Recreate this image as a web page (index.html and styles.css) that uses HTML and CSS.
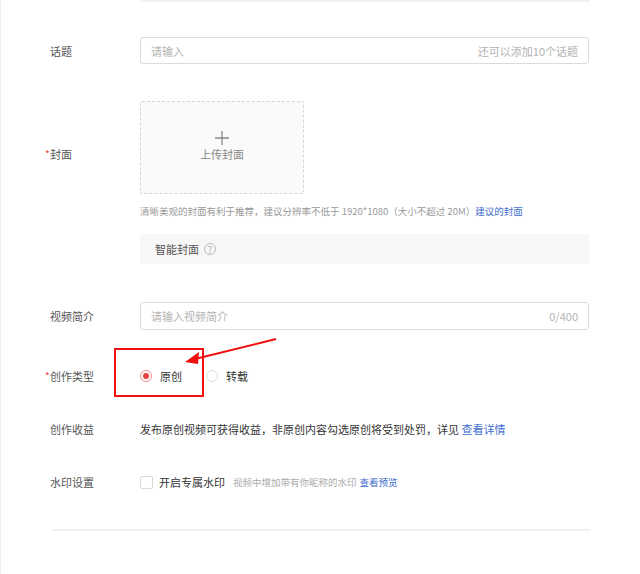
FILE: index.html
```html
<!DOCTYPE html>
<html lang="zh">
<head>
<meta charset="utf-8">
<link rel="stylesheet" href="styles.css">
</head>
<body>
<div class="page">
  <div class="prev-edge"></div>

  <div class="row row-topic">
    <div class="label">话题</div>
    <div class="field">
      <div class="input"><span class="ph">请输入</span><span class="ph">还可以添加10个话题</span></div>
    </div>
  </div>

  <div class="row row-cover">
    <div class="label label-cover"><span class="req">*</span>封面</div>
    <div class="field">
      <div class="upload">
        <svg class="plus" width="14" height="14" viewBox="0 0 14 14"><path d="M7 0V14M0 7H14" stroke="#888" stroke-width="1.3"/></svg>
        <span class="upload-text">上传封面</span>
      </div>
      <div class="hint">清晰美观的封面有利于推荐，建议分辨率不低于 1920*1080（大小不超过 20M）<a class="link">建议的封面</a></div>
      <div class="smart">智能封面<span class="qmark">?</span></div>
    </div>
  </div>

  <div class="row row-intro">
    <div class="label">视频简介</div>
    <div class="field">
      <div class="input"><span class="ph">请输入视频简介</span><span class="ph">0/400</span></div>
    </div>
  </div>

  <div class="row row-type">
    <div class="label"><span class="req">*</span>创作类型</div>
    <div class="field radios">
      <span class="radio on"></span><span class="opt opt-first">原创</span>
      <span class="radio"></span><span class="opt">转载</span>
    </div>
  </div>

  <div class="row row-income">
    <div class="label">创作收益</div>
    <div class="field text">发布原创视频可获得收益，非原创内容勾选原创将受到处罚，详见 <a class="link">查看详情</a></div>
  </div>

  <div class="row row-mark">
    <div class="label">水印设置</div>
    <div class="field marks">
      <span class="check"></span><span class="opt">开启专属水印</span>
      <span class="small">视频中增加带有你昵称的水印</span><a class="link small-link">查看预览</a>
    </div>
  </div>

  <div class="divider"></div>

  <div class="annot-box"></div>
  <svg class="annot-arrow" width="100" height="30" viewBox="0 0 100 30">
    <path d="M95 2 L14 22" stroke="#f01010" stroke-width="2" fill="none"/>
    <path d="M4 25 L18 15 L17 27 Z" fill="#f01010"/>
  </svg>
</div>
</body>
</html>
```

FILE: styles.css
```css
* { box-sizing: border-box; }
html, body { margin: 0; padding: 0; background: #fff; }
body {
  font-family: "Noto Sans CJK SC", "Liberation Sans", sans-serif;
  font-size: 11px;
  color: #333;
}
.page {
  position: relative;
  width: 640px;
  height: 574px;
  border-left: 1px solid #eee;
  overflow: hidden;
}
.prev-edge {
  margin-left: 140px;
  width: 449px;
  height: 2px;
  background: #f3f3f3;
}
.row {
  display: flex;
  align-items: center;
}
.label {
  width: 139px;
  padding-left: 49px;
  color: #555;
  line-height: 16px;
  position: relative;
}
.req {
  position: absolute;
  left: 44px;
  top: 0;
  color: #f04142;
  font-size: 10px;
}
.field { width: 449px; }
.input {
  height: 27px;
  border: 1px solid #dcdcdc;
  border-radius: 3px;
  display: flex;
  justify-content: space-between;
  align-items: center;
  padding: 0 10px;
}
.ph { color: #b3b3b3; font-size: 11px; }

.row-topic { margin-top: 35px; }

.row-cover { margin-top: 37px; align-items: flex-start; }
.label-cover { margin-top: 45px; }
.upload {
  width: 164px;
  height: 93px;
  border: 1px dashed #d6d6d6;
  border-radius: 2px;
  background: #fafafa;
  display: flex;
  flex-direction: column;
  align-items: center;
  padding-top: 29px;
}
.upload-text { color: #888; font-size: 11px; margin-top: 1px; line-height: 16px; }
.hint {
  margin-top: 10px;
  color: #999;
  font-size: 9.5px;
  line-height: 14px;
  white-space: nowrap;
}
.link { color: #3d6dcc; }
.smart {
  margin-top: 16px;
  height: 30px;
  background: #f7f7f7;
  border-radius: 3px;
  padding-left: 15px;
  display: flex;
  align-items: center;
  color: #555;
  font-size: 11px;
}
.qmark {
  display: inline-flex;
  width: 12px;
  height: 12px;
  border: 1px solid #bbb;
  border-radius: 50%;
  color: #aaa;
  font-size: 9px;
  line-height: 1;
  align-items: center;
  justify-content: center;
  margin-left: 5px;
}

.row-intro { margin-top: 38px; }
.row-intro .input { height: 28px; }

.row-type { margin-top: 38px; }
.radios { display: flex; align-items: center; }
.radio {
  width: 12px;
  height: 12px;
  border-radius: 50%;
  border: 1px solid #ddd;
  position: relative;
}
.radio.on { border-color: #f58b8b; }
.radio.on::after {
  content: "";
  position: absolute;
  left: 2px; top: 2px;
  width: 6px; height: 6px;
  border-radius: 50%;
  background: #f04142;
}
.opt { margin-left: 8px; color: #333; line-height: 16px; }
.opt-first { margin-right: 24px; }

.row-income { margin-top: 37px; }
.text { line-height: 16px; white-space: nowrap; }

.row-mark { margin-top: 37px; }
.marks { display: flex; align-items: center; white-space: nowrap; }
.check {
  width: 13px; height: 13px;
  border: 1px solid #d9d9d9;
  border-radius: 2px;
}
.marks .opt { margin-left: 6px; }
.small { color: #aaa; font-size: 9.5px; margin-left: 8px; }
.small-link { font-size: 9.5px; margin-left: 3px; }

.divider {
  margin-top: 39px;
  margin-left: 51px;
  width: 538px;
  height: 2px;
  background: #f0f0f0;
}

.annot-box {
  position: absolute;
  left: 113px;
  top: 348px;
  width: 90px;
  height: 49px;
  border: 2px solid #f01010;
}
.annot-arrow {
  position: absolute;
  left: 180px;
  top: 337px;
}
```
